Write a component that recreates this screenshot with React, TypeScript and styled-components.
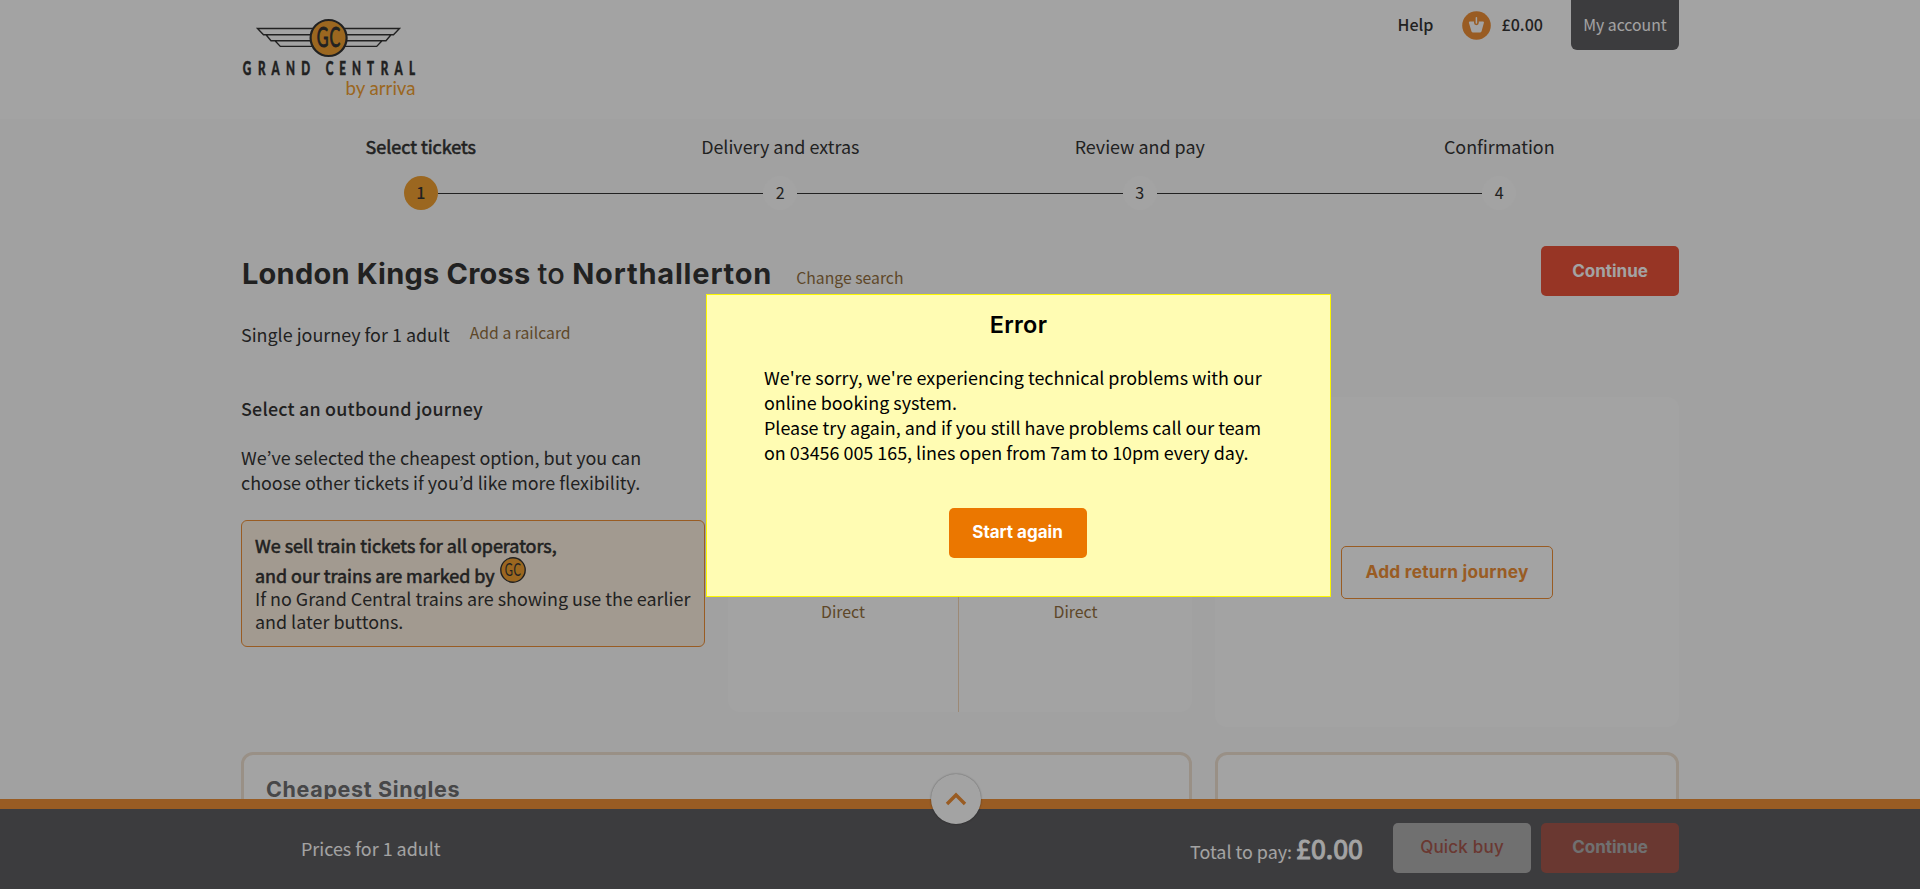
import React from 'react';
import styled, { createGlobalStyle, css } from 'styled-components';

const body = '"Noto Sans CJK KR", "Noto Sans", sans-serif';
const display = 'Inter, "Open Sans", sans-serif';
const ink = '#353535';
const orange = '#ef9038';
const amber = '#f2a132';
const link = '#947040';

const GlobalStyle = createGlobalStyle`
  * { box-sizing: border-box; }
  body { margin: 0; background: #fcfcfc; }
  h1, h2, h3, p { margin: 0; font-weight: 400; }
  button { font: inherit; border: 0; padding: 0; margin: 0; cursor: pointer; }
`;

const Page = styled.div`
  height: 889px;
  overflow: hidden;
  font: 400 17.92px/25px ${body};
  color: ${ink};
`;

const Container = styled.div`
  width: 1438px;
  margin: 0 auto;
`;

const heavy = css`
  -webkit-text-stroke: 0.6px currentColor;
`;

/* Header */
const Header = styled.header`
  height: 119px;
  background: #fff;
`;
const HeaderRow = styled(Container)`
  display: flex;
  align-items: flex-start;
`;
const LogoLink = styled.a`
  display: block;
  margin-right: auto;
  height: 110px;
`;
const TopNav = styled.nav`
  display: flex;
  align-items: center;
  height: 50px;
  font-size: 16.1px;
  font-weight: 500;
`;
const HelpLink = styled.a`
  margin-right: 28px;
  padding-bottom: 2px;
`;
const Basket = styled.a`
  display: flex;
  align-items: center;
  gap: 11px;
  margin-right: 28px;
`;
const BasketTotal = styled.span`
  padding-bottom: 2px;
`;
const Account = styled.a`
  display: flex;
  align-items: center;
  justify-content: center;
  width: 108px;
  height: 50px;
  padding-bottom: 2px;
  border-radius: 0 0 6px 6px;
  background: #5f5e61;
  color: #fff;
  font-size: 15.8px;
  font-weight: 400;
`;

/* Stepper */
const Steps = styled.ol`
  display: grid;
  grid-template-columns: repeat(4, 1fr);
  margin: 0;
  padding: 15px 0 0;
  list-style: none;
`;
const Step = styled.li<{ $active?: boolean }>`
  display: grid;
  justify-items: center;
  row-gap: 17px;
  ${p => p.$active && heavy}
`;
const Track = styled.div`
  display: grid;
  grid-template-columns: 1fr 34px 1fr;
  align-items: center;
  width: 100%;
`;
const Line = styled.span<{ $hidden?: boolean }>`
  height: 1px;
  background: ${p => (p.$hidden ? 'transparent' : ink)};
`;
const Dot = styled.span<{ $active?: boolean }>`
  display: grid;
  place-items: center;
  height: 34px;
  padding-bottom: 1px;
  border-radius: 50%;
  background: ${p => (p.$active ? amber : '#fff')};
  font-size: 16.1px;
  -webkit-text-stroke: 0;
  font-weight: ${p => (p.$active ? 500 : 400)};
`;

/* Buttons */
const Button = styled.button<{ $kind: 'red' | 'orange' | 'white'; $disabled?: boolean }>`
  display: flex;
  align-items: center;
  justify-content: center;
  width: 138px;
  height: 50px;
  padding-bottom: 1px;
  border-radius: 5px;
  font: 700 17px/20px ${display};
  letter-spacing: 0;
  color: #fff;
  ${p => p.$kind === 'red' && css`background: #ed533a;`}
  ${p => p.$kind === 'orange' && css`background: #eb7700; margin-right: 2px; padding-bottom: 2px;`}
  ${p => p.$kind === 'white' && css`background: #fff; color: #ed533a; font-weight: 500; letter-spacing: 0.2px;`}
  ${p => p.$disabled && css`opacity: 0.5; padding-bottom: 3px;`}
`;
const OutlineButton = styled.button`
  width: 212px;
  height: 53px;
  padding-bottom: 2px;
  border: 1px solid ${orange};
  border-radius: 5px;
  background: #fff;
  color: ${orange};
  font: 700 17.3px/20px ${display};
  letter-spacing: 0.25px;
`;

/* Journey heading */
const TitleRow = styled.div`
  display: flex;
  justify-content: space-between;
  align-items: flex-start;
  margin-top: 36px;
`;
const TitleGroup = styled.div`
  display: flex;
  align-items: baseline;
  gap: 24px;
  margin-top: 8px;
  padding-left: 1px;
`;
const Title = styled.h1`
  font: 700 29px/40px ${display};
  letter-spacing: 0.22px;
`;
const Light = styled.span`
  font-weight: 500;
`;
const Destination = styled.span`
  letter-spacing: 0.82px;
`;
const TextLink = styled.a`
  font-size: 15.75px;
  line-height: 22px;
  color: ${link};
`;
const Summary = styled.div`
  display: flex;
  gap: 20px;
  height: 25px;
  margin-top: 26px;
`;

/* Journeys */
const Journeys = styled.section`
  display: grid;
  grid-template-columns: repeat(3, 464px);
  column-gap: 23px;
  align-items: start;
  margin-top: 49px;
`;
const SectionTitle = styled.h2`
  font-size: 17.9px;
  font-weight: 500;
  letter-spacing: 0.2px;
  margin-bottom: 24px;
`;
const Notice = styled.div`
  margin-top: 25px;
  padding: 13px;
  border: 1px solid ${orange};
  border-radius: 6px;
  background: #fef1e1;
  line-height: 23px;
  white-space: nowrap;
`;
const Strong = styled.div`
  ${heavy}
`;
const MarkedLine = styled(Strong)`
  display: flex;
  align-items: flex-end;
  gap: 5px;
  height: 30px;
  svg { align-self: flex-start; -webkit-text-stroke: 0; }
`;
const Card = styled.div<{ $height: number }>`
  display: flex;
  height: ${p => p.$height}px;
  margin-top: 1px;
  border-radius: 12px;
  background: #fff;
`;
const Train = styled.div`
  flex: 0 0 230px;
  padding-top: 204px;
  text-align: center;
  font-size: 15.9px;
  line-height: 22px;
  color: ${link};
  & + & { flex: 1; border-left: 1px solid #f5d6b8; }
`;
const ReturnCard = styled(Card)`
  justify-content: center;
  padding-top: 149px;
`;

/* Tickets */
const Tickets = styled.section`
  display: grid;
  grid-template-columns: 951px 464px;
  column-gap: 23px;
  margin-top: 25px;
`;
const TicketBox = styled.div`
  height: 220px;
  padding: 19px 22px;
  border: 3px solid #efe1d2;
  border-radius: 12px;
  background: #fff;
`;
const TicketTitle = styled.h3`
  font: 700 21.5px/30px ${display};
  letter-spacing: 0.65px;
  color: #6f6f71;
`;

/* Basket bar */
const Bar = styled.footer`
  position: fixed;
  inset: auto 0 0 0;
  height: 90px;
  border-top: 10px solid ${orange};
  background: #5f5e61;
  color: #fff;
`;
const BarRow = styled(Container)`
  display: flex;
  align-items: center;
  gap: 10px;
  padding-top: 14px;
`;
const Prices = styled.span`
  margin: 0 auto 0 60px;
`;
const Total = styled.div`
  display: flex;
  align-items: baseline;
  gap: 4px;
  margin-right: 20px;
`;
const Amount = styled.strong`
  font-size: 26.8px;
  font-weight: 400;
  line-height: 30px;
  -webkit-text-stroke: 1px currentColor;
`;
const Expand = styled.button`
  position: absolute;
  top: -35px;
  left: 931px;
  display: grid;
  place-items: center;
  width: 50px;
  height: 50px;
  border-radius: 50%;
  background: #fff;
  box-shadow: 0 0 2px rgba(0, 0, 0, 0.45);
`;

/* Error dialog */
const Overlay = styled.div`
  position: fixed;
  inset: 0;
  background: rgba(0, 0, 0, 0.362);
`;
const Dialog = styled.div`
  position: fixed;
  top: 294px;
  left: 706px;
  display: flex;
  flex-direction: column;
  align-items: center;
  width: 625px;
  height: 303px;
  padding: 15px 56px;
  border: 1px solid #fbf600;
  background: #fffcb3;
  color: #000;
`;
const DialogTitle = styled.h2`
  font: 600 23.4px/30px ${display};
  letter-spacing: 0.3px;
`;
const Message = styled.p`
  align-self: stretch;
  margin: 25px 0 43px;
  padding-left: 1px;
  white-space: nowrap;
`;

/* Art-deco lettering is a narrow sans: horizontal positions are divided by the squeeze factor. */
const SQUEEZE = 0.62;
const WORDMARK: [string, number][] = [
  ['G', 6], ['R', 20.7], ['A', 34.7], ['N', 49.6], ['D', 64.6],
  ['C', 88.6], ['E', 101.6], ['N', 115.6], ['T', 129.4], ['R', 143.6], ['A', 157.6], ['L', 171],
];

const Wing = () => (
  <g fill="none" stroke={ink} strokeWidth="1.4">
    <path d="M41 28.5H-15.5L-9.5 34.7H41M-7 34.7L-2 40.7H41M2 40.7L7.3 46.4H41" transform="translate(32)" />
  </g>
);

const Logo = () => (
  <svg width="176" height="104" viewBox="0 0 176 104">
    <Wing />
    <g transform="translate(175) scale(-1 1)"><Wing /></g>
    <circle cx="87.6" cy="38" r="18" fill={amber} stroke={ink} strokeWidth="2.2" />
    <g transform={`scale(${SQUEEZE} 1)`} fill={ink} stroke={ink} fontFamily="Lato, sans-serif" textAnchor="middle">
      <text fontSize="26" strokeWidth="0.9" y="47" x={81.6 / SQUEEZE}>G</text>
      <text fontSize="26" strokeWidth="0.9" y="47" x={94 / SQUEEZE}>C</text>
      {WORDMARK.map(([ch, x], i) => (
        <text key={i} fontSize="18.8" strokeWidth="0.5" fontWeight="900" y="75" x={x / SQUEEZE}>{ch}</text>
      ))}
    </g>
    <text x="104.5" y="94.5" fontFamily="Lato, sans-serif" fontSize="19.5" fontWeight="400" fill={amber}
      textLength="70" lengthAdjust="spacingAndGlyphs">by arriva</text>
  </svg>
);

const Badge = () => (
  <svg width="26" height="26" viewBox="0 0 26 26">
    <circle cx="13" cy="13" r="12.2" fill={amber} stroke={ink} strokeWidth="1.4" />
    <g transform="scale(.62 1)" fill={ink} fontFamily="Lato, sans-serif" fontSize="18" textAnchor="middle">
      <text x="14.2" y="19.4">G</text>
      <text x="28" y="19.4">C</text>
    </g>
  </svg>
);

const BasketIcon = () => (
  <svg width="29" height="29" viewBox="0 0 29 29">
    <circle cx="14.5" cy="14.5" r="14.3" fill={orange} />
    <path d="M7.6 10.4H21.2Q22.2 10.6 21.9 11.8L19.6 20.3Q19.3 21.4 18.2 21.4H10.7Q9.7 21.4 9.4 20.3L6.9 11.8Q6.7 10.6 7.6 10.4Z" fill="#fff" />
    <path d="M12 9V11.8A2.4 2.4 0 0 0 16.8 11.8V9Z" fill={orange} />
    <path d="M14.4 6.8V12" stroke="#fff" strokeWidth="1.5" strokeLinecap="round" />
  </svg>
);

const STEPS = ['Select tickets', 'Delivery and extras', 'Review and pay', 'Confirmation'];

export default function App() {
  return (
    <Page>
      <GlobalStyle />
      <Header>
        <HeaderRow>
          <LogoLink><Logo /></LogoLink>
          <TopNav>
            <HelpLink>Help</HelpLink>
            <Basket><BasketIcon /><BasketTotal>£0.00</BasketTotal></Basket>
            <Account>My account</Account>
          </TopNav>
        </HeaderRow>
      </Header>

      <Container>
        <Steps>
          {STEPS.map((label, i) => (
            <Step key={label} $active={i === 0}>
              {label}
              <Track>
                <Line $hidden={i === 0} />
                <Dot $active={i === 0}>{i + 1}</Dot>
                <Line $hidden={i === STEPS.length - 1} />
              </Track>
            </Step>
          ))}
        </Steps>

        <TitleRow>
          <TitleGroup>
            <Title>London Kings Cross <Light>to</Light> <Destination>Northallerton</Destination></Title>
            <TextLink>Change search</TextLink>
          </TitleGroup>
          <Button $kind="red">Continue</Button>
        </TitleRow>
        <Summary>
          Single journey for 1 adult
          <TextLink>Add a railcard</TextLink>
        </Summary>

        <Journeys>
          <div>
            <SectionTitle>Select an outbound journey</SectionTitle>
            <p>We’ve selected the cheapest option, but you can<br />choose other tickets if you’d like more flexibility.</p>
            <Notice>
              <Strong>We sell train tickets for all operators,</Strong>
              <MarkedLine>and our trains are marked by <Badge /></MarkedLine>
              If no Grand Central trains are showing use the earlier<br />and later buttons.
            </Notice>
          </div>
          <Card $height={315}>
            <Train>Direct</Train>
            <Train>Direct</Train>
          </Card>
          <ReturnCard $height={330}>
            <OutlineButton>Add return journey</OutlineButton>
          </ReturnCard>
        </Journeys>

        <Tickets>
          <TicketBox><TicketTitle>Cheapest Singles</TicketTitle></TicketBox>
          <TicketBox />
        </Tickets>
      </Container>

      <Bar>
        <Expand aria-label="Show basket">
          <svg width="22" height="14" viewBox="0 0 22 14">
            <path d="M2 12L11 3L20 12" fill="none" stroke={orange} strokeWidth="3.4" />
          </svg>
        </Expand>
        <BarRow>
          <Prices>Prices for 1 adult</Prices>
          <Total>Total to pay: <Amount>£0.00</Amount></Total>
          <Button $kind="white" $disabled>Quick buy</Button>
          <Button $kind="red" $disabled>Continue</Button>
        </BarRow>
      </Bar>

      <Overlay />
      <Dialog role="alertdialog">
        <DialogTitle>Error</DialogTitle>
        <Message>
          We're sorry, we're experiencing technical problems with our<br />online booking system.<br />
          Please try again, and if you still have problems call our team<br />on 03456 005 165, lines open from 7am to 10pm every day.
        </Message>
        <Button $kind="orange">Start again</Button>
      </Dialog>
    </Page>
  );
}
